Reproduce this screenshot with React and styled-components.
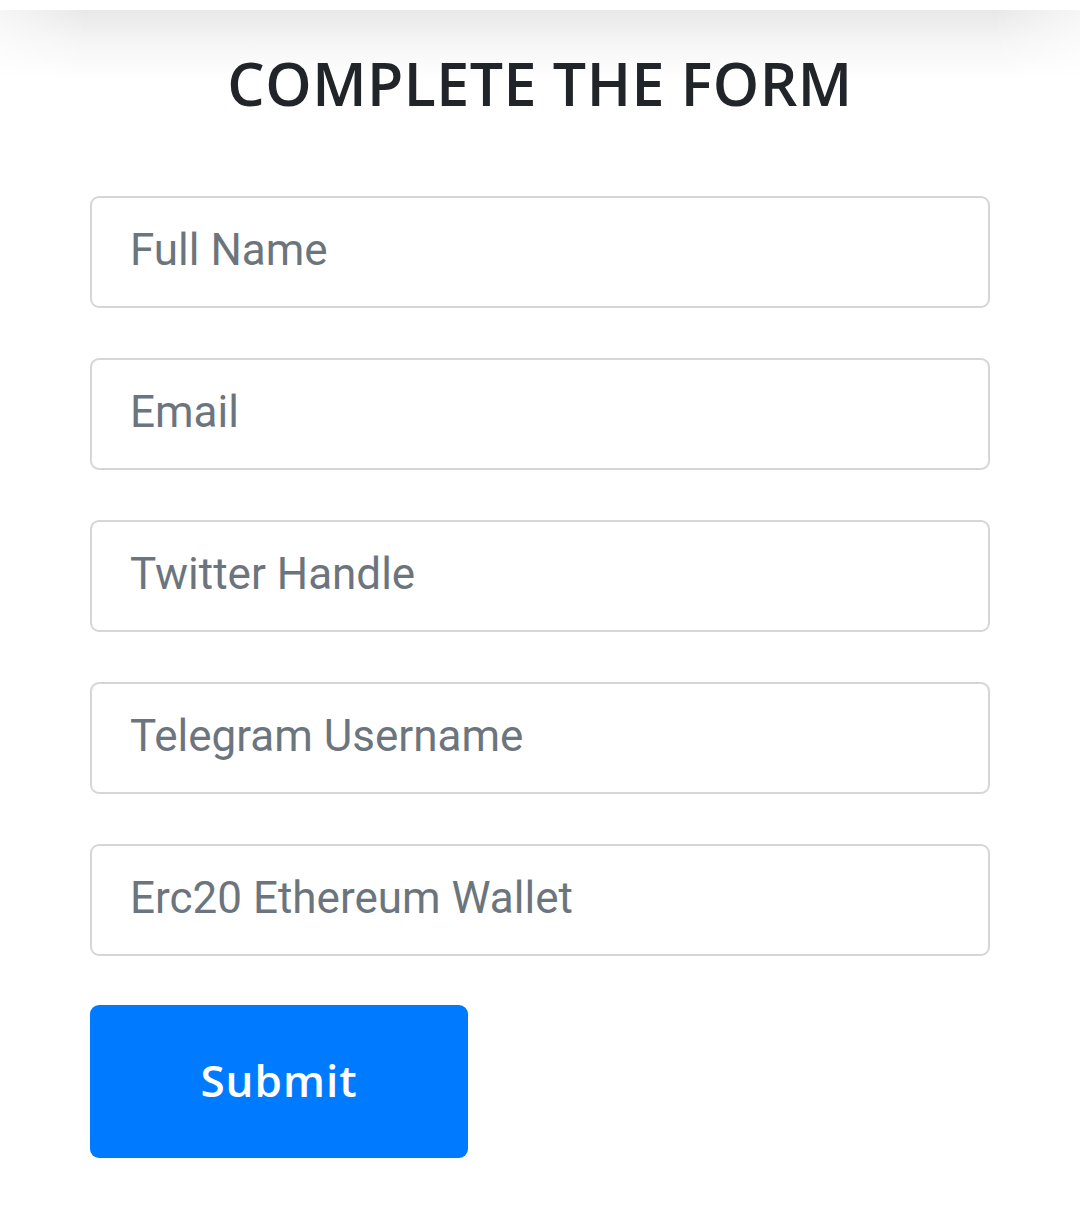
import React from 'react';
import styled, { createGlobalStyle } from 'styled-components';

const GlobalStyle = createGlobalStyle`
  body {
    margin: 0;
    background: #fff;
    font-family: Roboto, "Liberation Sans", sans-serif;
  }
`;

const Page = styled.div`
  width: 1080px;
  min-height: 1216px;
  padding-top: 10px;
  box-sizing: border-box;
`;

const Header = styled.header`
  height: 130px;
  display: flex;
  justify-content: center;
  align-items: flex-start;
  background: linear-gradient(#e8e8e8 0px, #f6f6f6 35px, #fff 70px);
  -webkit-mask-image: linear-gradient(90deg, rgba(0,0,0,0.4), #000 8%, #000 92%, rgba(0,0,0,0.4));
`;

const Title = styled.h1`
  margin: 38px 0 0;
  font-family: "Open Sans", sans-serif;
  font-weight: 600;
  font-size: 59px;
  line-height: 70px;
  color: #212529;
  letter-spacing: 0.5px;
`;

const Form = styled.form`
  margin: 56px 0 0 90px;
  width: 900px;
  display: flex;
  flex-direction: column;
  gap: 50px;
`;

const Field = styled.input`
  height: 112px;
  box-sizing: border-box;
  border: 2.5px solid #d4d6d8;
  border-radius: 9px;
  padding: 0 38px 5px;
  font-family: Roboto, sans-serif;
  font-size: 44px;
  color: #495057;
  background: #fff;
  outline: none;

  &::placeholder {
    color: #6c757d;
  }
`;

const SubmitButton = styled.button`
  width: 378px;
  height: 153px;
  margin-top: -1px;
  padding-bottom: 4px;
  border: none;
  border-radius: 9px;
  background: #007bff;
  color: #fff;
  font-family: "Open Sans", sans-serif;
  font-weight: 600;
  font-size: 44px;
  letter-spacing: 1px;
  cursor: pointer;
`;

const fields = [
  'Full Name',
  'Email',
  'Twitter Handle',
  'Telegram Username',
  'Erc20 Ethereum Wallet',
];

export default function App() {
  return (
    <Page>
      <GlobalStyle />
      <Header>
        <Title>COMPLETE THE FORM</Title>
      </Header>
      <Form onSubmit={e => e.preventDefault()}>
        {fields.map(f => (
          <Field key={f} type="text" placeholder={f} />
        ))}
        <SubmitButton type="submit">Submit</SubmitButton>
      </Form>
    </Page>
  );
}
